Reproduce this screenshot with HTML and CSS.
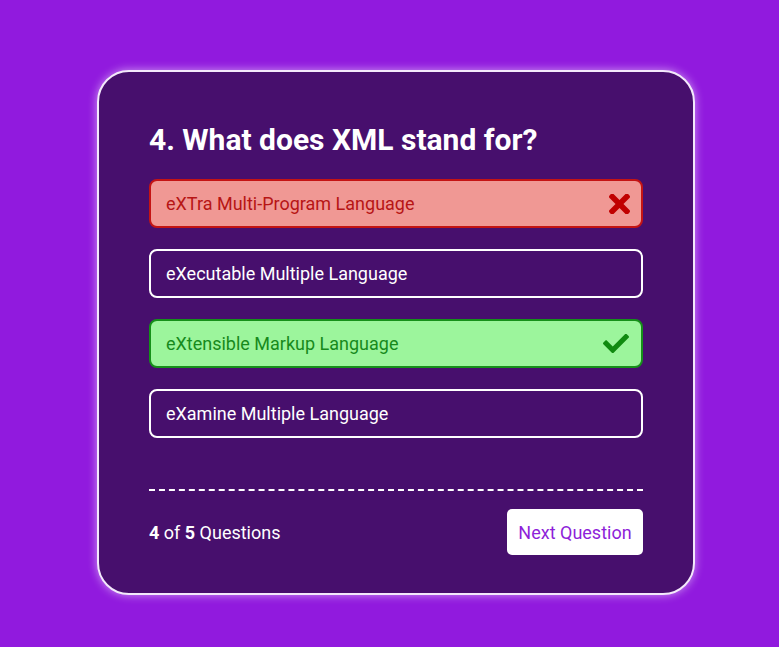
FILE: index.html
```html
<!DOCTYPE html>
<html lang="en">
<head>
<meta charset="utf-8">
<title>Quiz</title>
<link rel="stylesheet" href="styles.css">
</head>
<body>
<main class="quiz-card">
  <h2 class="question">4. What does XML stand for?</h2>
  <ul class="options">
    <li class="option option--wrong">
      <span>eXTra Multi-Program Language</span>
      <svg class="icon icon--x" width="21" height="20" viewBox="0 89 352 334" aria-hidden="true"><path fill="currentColor" d="M242.72 256l100.07-100.07c12.28-12.28 12.28-32.19 0-44.48l-22.24-22.240c-12.28-12.28-32.19-12.28-44.48 0L176 189.28 75.93 89.21c-12.28-12.28-32.19-12.28-44.48 0L9.21 111.45c-12.28 12.28-12.28 32.19 0 44.48L109.28 256 9.21 356.07c-12.28 12.28-12.28 32.19 0 44.48l22.24 22.24c12.28 12.28 32.2 12.28 44.48 0L176 322.72l100.07 100.07c12.28 12.28 32.2 12.28 44.48 0l22.24-22.24c12.28-12.28 12.28-32.19 0-44.48L242.72 256z"/></svg>
    </li>
    <li class="option">
      <span>eXecutable Multiple Language</span>
    </li>
    <li class="option option--right">
      <span>eXtensible Markup Language</span>
      <svg class="icon icon--check" width="26" height="19" viewBox="0 72 512 368" aria-hidden="true"><path fill="currentColor" d="M173.898 439.404l-166.4-166.4c-9.997-9.997-9.997-26.206 0-36.204l36.203-36.204c9.997-9.998 26.207-9.998 36.204 0L192 312.69 432.095 72.596c9.997-9.997 26.207-9.997 36.204 0l36.203 36.204c9.997 9.997 9.997 26.206 0 36.204l-294.4 294.401c-9.998 9.997-26.207 9.997-36.204-.001z"/></svg>
    </li>
    <li class="option">
      <span>eXamine Multiple Language</span>
    </li>
  </ul>
  <footer class="quiz-footer">
    <p class="progress"><b>4</b> of <b>5</b> Questions</p>
    <button class="next-btn" type="button">Next Question</button>
  </footer>
</main>
</body>
</html>
```

FILE: styles.css
```css
* { box-sizing: border-box; }

html, body { margin: 0; padding: 0; }

body {
  background: #911ade;
  font-family: Roboto, "Noto Sans", sans-serif;
  color: #ffffff;
  min-height: 100vh;
}

.quiz-card {
  width: 598px;
  margin: 70px 0 0 97px;
  background: #470f6d;
  border: 2px solid #f3e9fb;
  border-radius: 32px;
  box-shadow: 0 0 10px rgba(255, 255, 255, 0.55);
  padding: 50px 50px 38px;
}

.question {
  margin: 0 0 22px;
  font-size: 30px;
  font-weight: 700;
  line-height: 35px;
  color: #ffffff;
}

.options {
  list-style: none;
  margin: 0 0 51px;
  padding: 0;
  display: flex;
  flex-direction: column;
  gap: 21px;
}

.option {
  height: 49px;
  display: flex;
  align-items: center;
  justify-content: space-between;
  padding: 0 11px 0 15px;
  border: 2px solid #ffffff;
  border-radius: 8px;
  font-size: 18px;
  color: #ffffff;
}

.option--wrong {
  background: #f09894;
  border-color: #c41414;
  color: #b71515;
}

.option--right {
  background: #9cf59c;
  border-color: #16901a;
  color: #178a1c;
}

.icon { display: block; flex: none; }
.icon--x { color: #c00000; }
.icon--check { color: #108a10; margin-right: 1px; }

.quiz-footer {
  border-top: 2px dashed #ffffff;
  padding-top: 18px;
  display: flex;
  align-items: center;
  justify-content: space-between;
}

.progress {
  margin: 0;
  font-size: 18px;
  color: #ffffff;
}

.next-btn {
  width: 136px;
  height: 46px;
  border: none;
  border-radius: 5px;
  background: #ffffff;
  color: #8e1fd9;
  font-family: Roboto, "Noto Sans", sans-serif;
  font-size: 18px;
  padding: 0;
  cursor: pointer;
}
```
